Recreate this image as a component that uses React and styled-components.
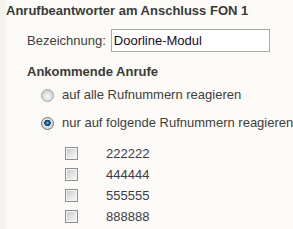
import React from "react";
import styled, { createGlobalStyle } from "styled-components";

const Global = createGlobalStyle`
  html, body { margin: 0; padding: 0; }
  body {
    background: #f5f4ef;
    font-family: "Liberation Sans", Arial, sans-serif;
    font-size: 13px;
    line-height: 16px;
    color: #404040;
  }
`;

const Panel = styled.div`
  margin-left: 6px;
  min-height: 229px;
  background: #fbfaf6;
  overflow: hidden;
`;

const Title = styled.h1`
  margin: 0;
  padding-top: 3px;
  font-size: 13px;
  line-height: 16px;
  font-weight: bold;
  color: #3a3a3a;
  white-space: nowrap;
`;

const FieldRow = styled.div`
  display: flex;
  align-items: center;
  gap: 5px;
  margin: 10px 0 0 21px;
  height: 23px;
`;

const Label = styled.label`
  color: #404040;
`;

const TextInput = styled.input`
  box-sizing: border-box;
  width: 159px;
  height: 23px;
  margin: 0;
  padding: 0 2px;
  border: 1px solid #a8a8a8;
  background: #fff;
  font-family: "Liberation Sans", Arial, sans-serif;
  font-size: 13px;
  color: #1a0a2a;
  outline: none;
`;

const Heading = styled.h2`
  margin: 12px 0 0 21px;
  font-size: 13px;
  line-height: 16px;
  font-weight: bold;
  color: #3a3a3a;
`;

const RadioList = styled.div`
  display: flex;
  flex-direction: column;
  gap: 12px;
  margin: 7px 0 0 35px;
`;

const RadioRow = styled.label`
  display: flex;
  align-items: center;
  gap: 8px;
  height: 16px;
  white-space: nowrap;
`;

const Radio = styled.input.attrs({ type: "radio" })`
  appearance: none;
  box-sizing: border-box;
  flex: none;
  width: 13px;
  height: 13px;
  margin: 0;
  border-radius: 50%;
  border: 1px solid ${(p) => (p.checked ? "#6f7780" : "#a4a6a8")};
  background: ${(p) =>
    p.checked
      ? "radial-gradient(circle at 50% 45%, #7cc4ee 0, #2379b8 1.3px, #0d4a7c 2.4px, #1d3247 3px, #e6e7e8 3.5px, #d2d4d6 5.5px)"
      : "radial-gradient(circle at 50% 60%, #fbfbfb 0, #e4e5e6 3px, #cdcfd1 6px)"};
`;

const CheckList = styled.div`
  display: flex;
  flex-direction: column;
  margin: 12px 0 0 59px;
`;

const CheckRow = styled.label`
  display: flex;
  align-items: center;
  gap: 28px;
  height: 21px;
`;

const Check = styled.input.attrs({ type: "checkbox" })`
  appearance: none;
  box-sizing: border-box;
  flex: none;
  width: 13px;
  height: 13px;
  margin: 0;
  border: 1px solid #8e8f8f;
  box-shadow: inset 0 0 0 1px #f3f3f3;
  background: linear-gradient(135deg, #c2c4c6 0%, #e4e5e6 55%, #fbfbfb 100%);
`;

const Number = styled.span`
  color: #3c3c4c;
`;

const numbers = ["222222", "444444", "555555", "888888"];

export default function App() {
  return (
    <>
      <Global />
      <Panel>
        <Title>Anrufbeantworter am Anschluss FON 1</Title>
        <FieldRow>
          <Label htmlFor="bez">Bezeichnung:</Label>
          <TextInput id="bez" defaultValue="Doorline-Modul" />
        </FieldRow>
        <Heading>Ankommende Anrufe</Heading>
        <RadioList>
          <RadioRow>
            <Radio name="mode" checked={false} readOnly />
            auf alle Rufnummern reagieren
          </RadioRow>
          <RadioRow>
            <Radio name="mode" checked readOnly />
            nur auf folgende Rufnummern reagieren
          </RadioRow>
        </RadioList>
        <CheckList>
          {numbers.map((n) => (
            <CheckRow key={n}>
              <Check />
              <Number>{n}</Number>
            </CheckRow>
          ))}
        </CheckList>
      </Panel>
    </>
  );
}
